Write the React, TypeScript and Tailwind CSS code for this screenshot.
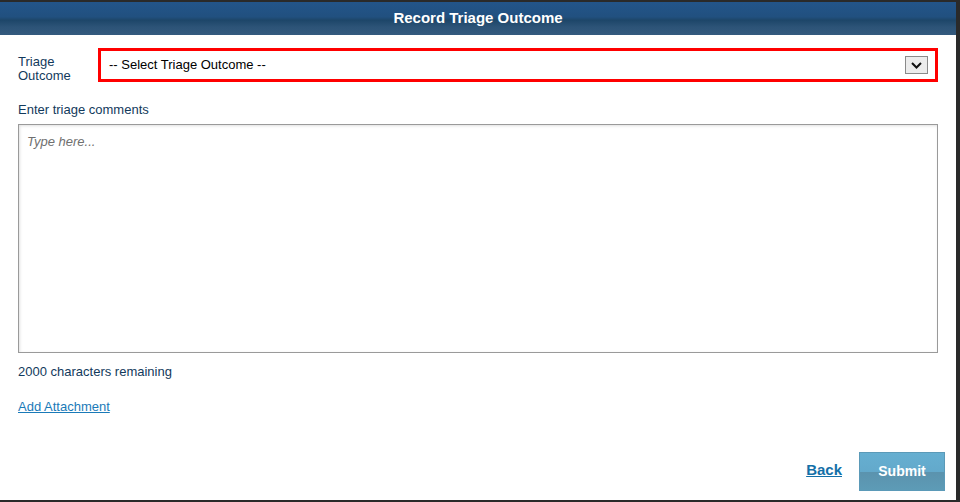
export default function App() {
  return (
    <div className="flex h-[502px] w-[960px] flex-col bg-[#2a2a2a] pt-[2px] pb-[2px] pr-[4px] font-['Liberation_Sans',Arial,sans-serif]">
      <div className="flex flex-1 flex-col bg-white">
        <div className="flex h-[33px] items-center justify-center bg-[linear-gradient(to_bottom,#23558a_0%,#21507f_45%,#1d4669_55%,#2c5377_75%,#345a7e_100%)]">
          <h1 className="text-[15px] font-bold text-white">Record Triage Outcome</h1>
        </div>

        <div className="flex flex-1 flex-col px-[18px] pt-[13px]">
          <div className="flex items-start">
            <label className="w-[80px] pt-[7px] text-[13px] leading-[14px] text-[#123a5c]">
              Triage
              <br />
              Outcome
            </label>
            <div className="flex h-[34px] w-[840px] items-center justify-between border-[3px] border-[#ff0000] pl-[8px] pr-[7px]">
              <span className="text-[13px] text-black">-- Select Triage Outcome --</span>
              <span className="flex h-[18px] w-[23px] items-center justify-center border border-[#8a8a8a] bg-[#ececec]">
                <svg width="11" height="7" viewBox="0 0 11 7">
                  <path d="M1 1 L5.5 5.5 L10 1" fill="none" stroke="#111" strokeWidth="2" />
                </svg>
              </span>
            </div>
          </div>

          <p className="mt-[17px] text-[13px] text-[#123a5c]">Enter triage comments</p>

          <div className="mt-[4px] h-[229px] w-[920px] border border-[#9a9a9a] shadow-[inset_1px_1px_3px_rgba(0,0,0,0.12)]">
            <p className="pl-[8px] pt-[7px] text-[13px] italic text-[#6f6f6f]">Type here...</p>
          </div>

          <p className="mt-[9px] text-[13px] text-[#123a5c]">2000 characters remaining</p>

          <a href="#" className="mt-[16px] self-start text-[13px] text-[#1a7ab8] underline">
            Add Attachment
          </a>

          <div className="mt-auto mb-[10px] mr-[-6px] flex items-center justify-end gap-[18px]">
            <a href="#" className="mt-[-3px] text-[15px] font-bold text-[#1470a8] underline">
              Back
            </a>
            <button className="h-[37px] w-[84px] bg-[linear-gradient(to_bottom,#66afd1_0%,#63a9cb_50%,#5b93ae_52%,#5d9bb6_100%)] text-[14px] font-bold text-white shadow-[0_0_0_1px_#5b9ab8]">
              Submit
            </button>
          </div>
        </div>
      </div>
    </div>
  );
}
